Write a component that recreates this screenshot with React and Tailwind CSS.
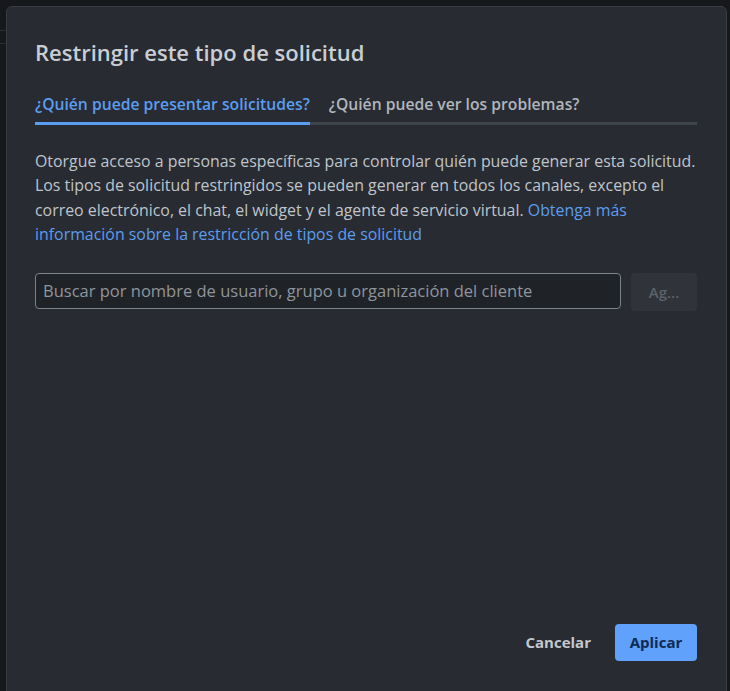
export default function App() {
  return (
    <div className="w-[730px] h-[691px] bg-[#16181c] overflow-hidden relative" style={{ fontFamily: '"Open Sans", "Noto Sans", sans-serif' }}>
      <div className="absolute left-0 top-0 w-[6px] h-full">
        <div className="mt-[30px] h-px bg-[#2a2d33]" />
        <div className="mt-[12px] h-px bg-[#2a2d33]" />
      </div>
      <div className="absolute left-[6px] top-[6px] w-[721px] h-[700px] bg-[#282b31] border border-[#383c43] rounded-[6px] flex flex-col px-[28px]">
        <h1 className="mt-[30px] text-[22px] leading-[30px] font-semibold text-[#c9ced4]">Restringir este tipo de solicitud</h1>
        <div className="mt-[26px] flex items-end border-b-[3px] border-[#3e444c] w-[662px]">
          <div className="relative pb-[7px] text-[15.7px] leading-[22px] font-semibold text-[#5b9df0] pr-[19px]">
            ¿Quién puede presentar solicitudes?
            <div className="absolute left-0 right-[19px] bottom-[-3px] h-[3px] bg-[#5b9df0]" />
          </div>
          <div className="pb-[7px] text-[15.7px] leading-[22px] font-semibold text-[#b0b6bd]">¿Quién puede ver los problemas?</div>
        </div>
        <p className="mt-[24px] text-[15.9px] leading-[24.3px] text-[#bfc5cc] w-[666px]">
          Otorgue acceso a personas específicas para controlar quién puede generar esta solicitud. Los tipos de solicitud restringidos se pueden generar en todos los canales, excepto el correo electrónico, el chat, el widget y el agente de servicio virtual.{' '}
          <span className="text-[#5b9df0]">Obtenga más información sobre la restricción de tipos de solicitud</span>
        </p>
        <div className="mt-[27px] flex gap-[10px] w-[662px]">
          <div className="w-[586px] h-[36px] border border-[#7d838b] rounded-[4px] bg-[#1f2227] flex items-center px-[7px] text-[16.5px] text-[#8f959c] whitespace-nowrap overflow-hidden">
            Buscar por nombre de usuario, grupo u organización del cliente
          </div>
          <div className="w-[66px] h-[38px] rounded-[4px] bg-[#30343a] flex items-center justify-center text-[15px] font-semibold text-[#5c626a]">Ag...</div>
        </div>
        <div className="flex-1" />
        <div className="mb-[44px] flex items-center justify-end gap-[24px] w-[662px]">
          <span className="text-[15px] font-bold text-[#c3c8ce]">Cancelar</span>
          <div className="w-[82px] h-[37px] rounded-[4px] bg-[#5fa1fb] flex items-center justify-center text-[15px] font-bold text-[#0f2b55]">Aplicar</div>
        </div>
      </div>
    </div>
  );
}
